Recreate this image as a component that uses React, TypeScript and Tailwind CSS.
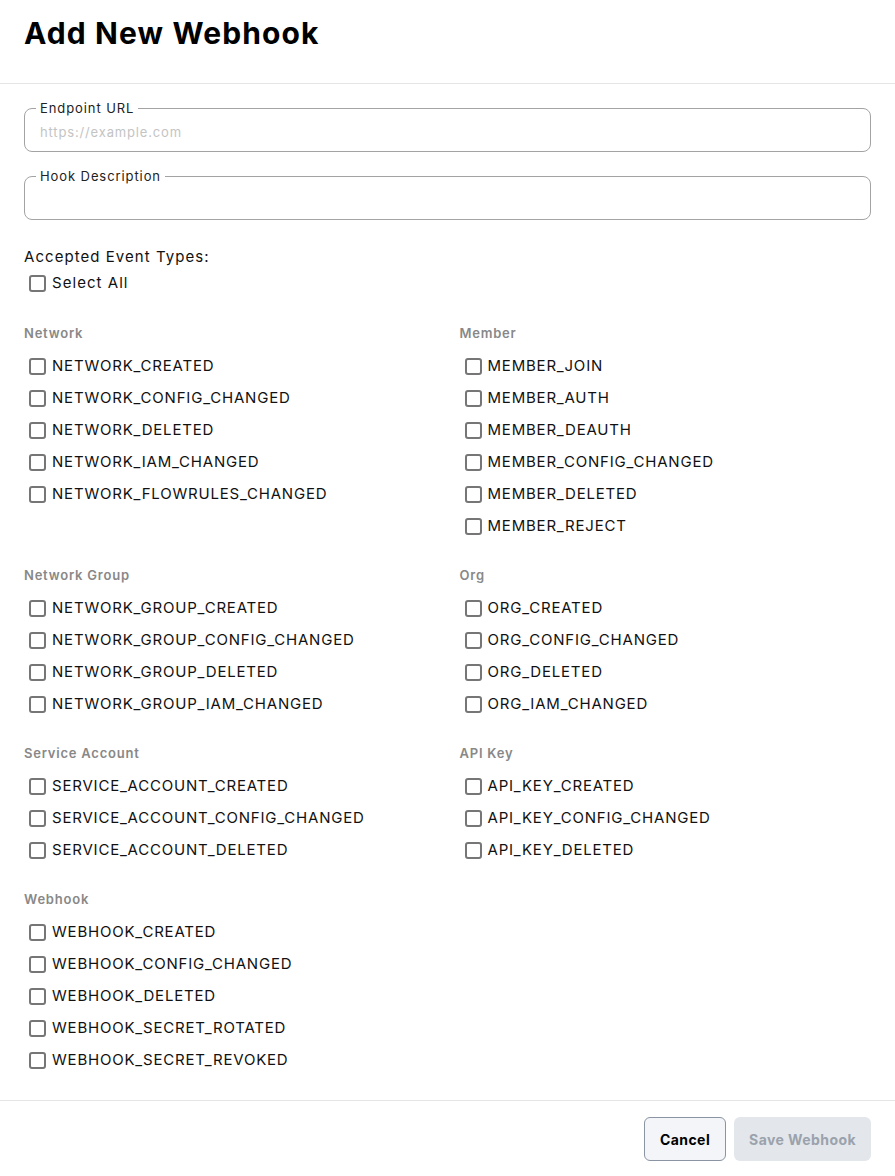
import { useState } from "react";

const groups = [
    {
        left: { title: "Network", items: ["NETWORK_CREATED", "NETWORK_CONFIG_CHANGED", "NETWORK_DELETED", "NETWORK_IAM_CHANGED", "NETWORK_FLOWRULES_CHANGED"] },
        right: { title: "Member", items: ["MEMBER_JOIN", "MEMBER_AUTH", "MEMBER_DEAUTH", "MEMBER_CONFIG_CHANGED", "MEMBER_DELETED", "MEMBER_REJECT"] },
    },
    {
        left: { title: "Network Group", items: ["NETWORK_GROUP_CREATED", "NETWORK_GROUP_CONFIG_CHANGED", "NETWORK_GROUP_DELETED", "NETWORK_GROUP_IAM_CHANGED"] },
        right: { title: "Org", items: ["ORG_CREATED", "ORG_CONFIG_CHANGED", "ORG_DELETED", "ORG_IAM_CHANGED"] },
    },
    {
        left: { title: "Service Account", items: ["SERVICE_ACCOUNT_CREATED", "SERVICE_ACCOUNT_CONFIG_CHANGED", "SERVICE_ACCOUNT_DELETED"] },
        right: { title: "API Key", items: ["API_KEY_CREATED", "API_KEY_CONFIG_CHANGED", "API_KEY_DELETED"] },
    },
    {
        left: { title: "Webhook", items: ["WEBHOOK_CREATED", "WEBHOOK_CONFIG_CHANGED", "WEBHOOK_DELETED", "WEBHOOK_SECRET_ROTATED", "WEBHOOK_SECRET_REVOKED"] },
        right: null,
    },
];

function Check({ label, checked, onChange, wide }: { label: string; checked: boolean; onChange: () => void; wide?: boolean }) {
    return (
        <label className="flex items-center gap-[6px] h-[32px] pl-[5px] cursor-pointer">
            <span
                onClick={onChange}
                className={`w-[17px] h-[17px] rounded-[3px] border-2 ${checked ? "border-[#1f2937] bg-[#1f2937]" : "border-[#767676] bg-white"}`}
            />
            <span className={`text-[15px] text-[#111] ${wide ? "tracking-[0.07em]" : "tracking-[0.053em]"}`}>{label}</span>
        </label>
    );
}

function Group({ title, items, selected, toggle }: { title: string; items: string[]; selected: Set<string>; toggle: (k: string) => void }) {
    return (
        <div>
            <p className="text-[13px] font-semibold text-[#888] tracking-[0.06em] h-[17px] leading-[17px] mb-[8px]">{title}</p>
            {items.map((it) => (
                <Check key={it} label={it} checked={selected.has(it)} onChange={() => toggle(it)} />
            ))}
        </div>
    );
}

export default function App() {
    const [selected, setSelected] = useState<Set<string>>(new Set());
    const [allChecked, setAllChecked] = useState(false);

    const toggle = (k: string) => {
        const next = new Set(selected);
        if (next.has(k)) next.delete(k);
        else next.add(k);
        setSelected(next);
    };

    return (
        <div className="w-[895px] min-h-[1176px] bg-white font-['Inter',sans-serif] text-black">
            {/* 헤더 */}
            <div className="h-[84px] border-b border-[#e5e5e5] px-[24px] flex items-start pt-[13px]">
                <h1 className="text-[30px] font-bold tracking-[0.037em] leading-[40px]">Add New Webhook</h1>
            </div>

            {/* 본문 */}
            <div className="px-[24px] pt-[23px]">
                <fieldset className="border border-[#a3a3a3] rounded-[8px] px-[11px] h-[53px] -mt-[8px]">
                    <legend className="px-[4px] text-[13px] text-[#222] tracking-[0.07em]">Endpoint URL</legend>
                    <input
                        className="w-full outline-none text-[13px] tracking-[0.065em] placeholder:text-[#c4c4c4] pl-[4px] pt-[1px]"
                        placeholder="https://example.com"
                    />
                </fieldset>
                <fieldset className="border border-[#a3a3a3] rounded-[8px] px-[11px] h-[53px] mt-[15px]">
                    <legend className="px-[4px] text-[13px] text-[#222] tracking-[0.07em]">Hook Description</legend>
                    <input className="w-full outline-none text-[13px] pl-[4px]" />
                </fieldset>

                <p className="mt-[27px] text-[15px] tracking-[0.07em] text-[#111] leading-[20px]">Accepted Event Types:</p>
                <Check wide label="Select All" checked={allChecked} onChange={() => setAllChecked(!allChecked)} />

                <div className="mt-[26px] flex flex-col gap-[25px]">
                    {groups.map((g, i) => (
                        <div key={i} className="grid grid-cols-2 gap-x-[24px]">
                            <Group title={g.left.title} items={g.left.items} selected={selected} toggle={toggle} />
                            {g.right ? <Group title={g.right.title} items={g.right.items} selected={selected} toggle={toggle} /> : <div />}
                        </div>
                    ))}
                </div>
            </div>

            {/* 푸터 */}
            <div className="mt-[24px] border-t border-[#e5e5e5] px-[24px] pt-[16px] pb-[16px] flex justify-end gap-[8px]">
                <button className="h-[44px] px-[15px] rounded-[6px] border border-[#8a94a3] bg-[#f3f5f8] text-[14px] font-bold tracking-[0.03em]">
                    Cancel
                </button>
                <button disabled className="h-[44px] px-[15px] rounded-[6px] bg-[#e3e6ea] text-[#9aa2ad] text-[14px] font-bold tracking-[0.03em]">
                    Save Webhook
                </button>
            </div>
        </div>
    );
}
